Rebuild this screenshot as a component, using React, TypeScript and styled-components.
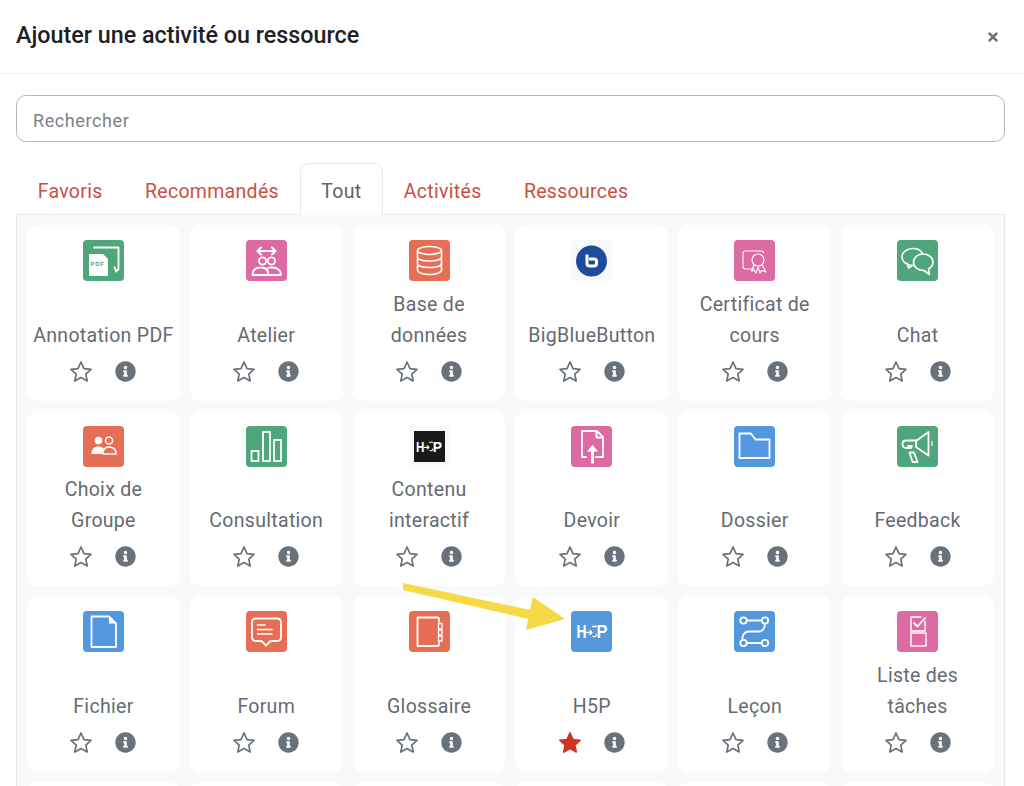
import React from "react";
import styled, { createGlobalStyle } from "styled-components";
import { FaInfoCircle, FaTimes } from "react-icons/fa";

const GREEN = "#4fa67b";
const PINK = "#dc6aa3";
const ORANGE = "#e66e55";
const BLUE = "#5398de";

const Line = (props: React.SVGProps<SVGPathElement>) => (
  <path fill="none" stroke="#fff" strokeWidth={1.8} strokeLinejoin="round" strokeLinecap="round" {...props} />
);

// logo: H and P are text, the arrow between them is a drawing
const H5pMark = ({ small }: { small?: boolean }) => (
  <g
    fill="#fff"
    fontFamily="'Liberation Sans', sans-serif"
    fontWeight="700"
    transform={small ? "translate(20 20.5) scale(.84) translate(-21 -20.5)" : undefined}
  >
    <text x="5.500" y="27" fontSize="18" textLength="10" lengthAdjust="spacingAndGlyphs">H</text>
    <text x="25.500" y="27" fontSize="18" textLength="11" lengthAdjust="spacingAndGlyphs">P</text>
    <Line strokeWidth={1.3} d="M15.500 21.500H21M19 19.500L21 21.500L19 23.500M22 25.500C24 26 25.500 25 25.500 23.500M21.500 15.500H25.500" />
  </g>
);

const icons: Record<string, React.ReactNode> = {
  pdf: (
    <>
      <Line d="M11 7.500H35.500V29L33 31.500L31.500 27" />
      <path d="M6 14H20L25 19V36H6Z" fill="#fff" />
      <text x="7.600" y="26" fontSize="6" fontWeight="700" letterSpacing="0.6" fill={GREEN} fontFamily="'Liberation Sans', sans-serif">PDF</text>
    </>
  ),
  workshop: (
    <>
      <Line d="M12 11H29M15 7.500L11.500 11L15 14.500M26 7.500L29.500 11L26 14.500" strokeWidth={2} />
      <circle cx="16.500" cy="21" r="3.600" fill="none" stroke="#fff" strokeWidth="1.800" />
      <circle cx="25.500" cy="21" r="3.600" fill="none" stroke="#fff" strokeWidth="1.800" />
      <Line d="M6.500 35C6.500 30 10 27.500 15 27.500C20 27.500 22.500 30 22.500 35ZM22 27.800C23 27.500 24.500 27.500 26 27.500C31 27.500 35 30 35 35H22.500" />
    </>
  ),
  database: (
    <>
      <ellipse cx="20.500" cy="10.500" rx="12" ry="4" fill="none" stroke="#fff" strokeWidth="1.600" />
      <Line strokeWidth={1.6} d="M8.500 10.500V30C8.500 32.500 14 34.500 20.500 34.500C27 34.500 32.500 32.500 32.500 30V10.500M8.500 17C8.500 19.500 14 21 20.500 21C27 21 32.500 19.500 32.500 17M8.500 23.500C8.500 26 14 27.500 20.500 27.500C27 27.500 32.500 26 32.500 23.500" />
    </>
  ),
  bbb: (
    <>
      <circle cx="20.500" cy="21" r="15.500" fill="#1f4b9c" />
      <path d="M16 14.500V23.500C16 25 17 26 18.500 26H23C24.500 26 25.500 25 25.500 23.500V21.500C25.500 20 24.500 19 23 19H18" fill="none" stroke="#fff" strokeWidth="3" strokeLinejoin="round" />
    </>
  ),
  certificate: (
    <>
      <Line strokeWidth={1.1} d="M20 29H11.500C10 29 9 28 9 26.500V13.500C9 12 10 11 11.500 11H27C28.500 11 29.500 12 29.500 13" />
      <circle cx="24" cy="20" r="6" fill="none" stroke="#fff" strokeWidth="1.100" />
      <Line strokeWidth={1.1} d="M20 25L17.500 31L20.500 30.500L22 33L24 27L26 33L27.500 30.500L32 32L28 25" />
    </>
  ),
  chat: (
    <>
      <Line d="M15 25.500C9 25 5 21.500 5 17C5 12 10 8.500 16 8.500C20.500 8.500 24 10.500 25.500 13.500M10 23L11.500 28L15.500 25.500" strokeWidth={1.6} />
      <Line d="M26 14C31.500 14 36 17.500 36 22C36 25 34 27.500 31.500 29L32.500 34.500L27 30.500C21 30.500 16.500 27 16.500 22C16.500 17.500 21 14 26 14Z" strokeWidth={1.6} />
    </>
  ),
  group: (
    <>
      <circle cx="15.500" cy="14.500" r="3.800" fill="#fff" />
      <path d="M8.500 28C8.500 23 11 20.500 15.500 20.500C18 20.500 20 21.500 21 23C19.500 24.500 19 26 19 28Z" fill="#fff" />
      <circle cx="26" cy="14.500" r="3.500" fill="none" stroke="#fff" strokeWidth="1.500" />
      <Line strokeWidth={1.5} d="M20 28C20 23 22.500 21 26 21C30 21 33 23 33 28Z" />
    </>
  ),
  poll: (
    <>
      <rect x="5.500" y="25" width="7" height="10" fill="none" stroke="#fff" strokeWidth="1.800" />
      <rect x="17" y="6" width="7" height="29" fill="none" stroke="#fff" strokeWidth="1.800" />
      <rect x="28" y="14" width="7" height="21" fill="none" stroke="#fff" strokeWidth="1.800" />
    </>
  ),
  h5pDark: (
    <>
      <rect x="5" y="5" width="31" height="31" fill="#1a1a1a" />
      <H5pMark small />
    </>
  ),
  assign: (
    <>
      <Line d="M15 31H11V5H26L32 11V31H25M25.500 5.500V11.500H32" />
      <path d="M21.500 19L27 25.500H23V37.500H20V25.500H16Z" fill="#fff" />
    </>
  ),
  folder: <Line d="M5.500 32V7.500H17L21.500 13.500H35.500V32Z" />,
  feedback: (
    <>
      <Line d="M19 15L31.500 6V29.500L19 21ZM19 14.500H9.500C7 14.500 5.500 16 5.500 18C5.500 20.500 7 22 9.500 22H14L15 20H11" />
      <Line d="M12.500 26.500H17L20.500 36H15.500Z" />
      <Line d="M35 15.500V19.500" strokeWidth={1.2} />
    </>
  ),
  file: (
    <>
      <Line d="M8.500 36V5.500H26L33 12.500V36Z" />
      <path d="M26 6L32.500 12.500H26Z" fill="#fff" />
    </>
  ),
  forum: (
    <>
      <Line d="M10 7.500H31C33.500 7.500 35 9 35 11.500V26C35 28.500 33.500 30 31 30H24.500L20 34.500L15.500 30H10C7.500 30 6 28.500 6 26V11.500C6 9 7.500 7.500 10 7.500Z" />
      <Line d="M11.500 14H19M11.500 18.500H26M11.500 23H26" strokeWidth={1.6} />
    </>
  ),
  glossary: (
    <>
      <Line d="M30 11V8C30 7 29.500 6.500 28.500 6.500H8.500V35H28.500C29.500 35 30 34.500 30 33.500V31" />
      <Line strokeWidth={1.3} d="M29.500 12.500H33V18H29.500ZM29.500 19H33V24H29.500ZM29.500 25H33V30H29.500Z" />
    </>
  ),
  h5p: <H5pMark />,
  lesson: (
    <>
      <circle cx="9.500" cy="9.500" r="3.200" fill="none" stroke="#fff" strokeWidth="1.800" />
      <circle cx="31" cy="9.500" r="3.200" fill="none" stroke="#fff" strokeWidth="1.800" />
      <circle cx="9.500" cy="32" r="3.200" fill="none" stroke="#fff" strokeWidth="1.800" />
      <circle cx="31" cy="32" r="3.200" fill="none" stroke="#fff" strokeWidth="1.800" />
      <Line d="M12.700 9.500H27.800M12.700 32H27.800M31 12.700C31 17 28.500 20.500 25 20.500H15C10.500 20.500 8 24 8.500 28.800" />
    </>
  ),
  checklist: (
    <>
      <Line strokeWidth={1.4} d="M28 10V20H14V6H24" />
      <Line strokeWidth={1.8} d="M17 12L20.500 15.500L28 7" />
      <rect x="14" y="22" width="15" height="13" fill="none" stroke="#fff" strokeWidth="1.400" />
    </>
  ),
};

type Activity = { name: string; icon: React.ReactNode; tint: string; starred?: boolean };

const activities: Activity[] = [
  { name: "Annotation PDF", icon: icons.pdf, tint: GREEN },
  { name: "Atelier", icon: icons.workshop, tint: PINK },
  { name: "Base de\ndonnées", icon: icons.database, tint: ORANGE },
  { name: "BigBlueButton", icon: icons.bbb, tint: "#f8f9fa" },
  { name: "Certificat de\ncours", icon: icons.certificate, tint: PINK },
  { name: "Chat", icon: icons.chat, tint: GREEN },
  { name: "Choix de\nGroupe", icon: icons.group, tint: ORANGE },
  { name: "Consultation", icon: icons.poll, tint: GREEN },
  { name: "Contenu\ninteractif", icon: icons.h5pDark, tint: "#f8f9fa" },
  { name: "Devoir", icon: icons.assign, tint: PINK },
  { name: "Dossier", icon: icons.folder, tint: BLUE },
  { name: "Feedback", icon: icons.feedback, tint: GREEN },
  { name: "Fichier", icon: icons.file, tint: BLUE },
  { name: "Forum", icon: icons.forum, tint: ORANGE },
  { name: "Glossaire", icon: icons.glossary, tint: ORANGE },
  { name: "H5P", icon: icons.h5p, tint: BLUE, starred: true },
  { name: "Leçon", icon: icons.lesson, tint: BLUE },
  { name: "Liste des\ntâches", icon: icons.checklist, tint: PINK },
];

const tabs = ["Favoris", "Recommandés", "Tout", "Activités", "Ressources"];

const STAR = "11,1 14,7.6 21,8.4 15.8,13.1 17.2,20 11,16.5 4.8,20 6.200,13.100 1,8.400 8,7.600";

function App() {
  return (
    <Page>
      <GlobalStyle />
      <Header>
        <Title>Ajouter une activité ou ressource</Title>
        <CloseButton aria-label="Fermer">
          <FaTimes />
        </CloseButton>
      </Header>
      <Body>
        <Search placeholder="Rechercher" />
        <Tabs>
          {tabs.map((t) => (
            <Tab key={t} $active={t === "Tout"}>
              {t}
            </Tab>
          ))}
        </Tabs>
        <Panel>
          {activities.map((a) => (
            <Card key={a.name}>
              <IconBox $tint={a.tint}>
                <svg width="41" height="41" viewBox="0 0 41 41">
                  {a.icon}
                </svg>
              </IconBox>
              <Name>
                <span>{a.name}</span>
              </Name>
              <Actions>
                <StarIcon viewBox="0 0 22 21" $on={a.starred}>
                  <polygon points={STAR} />
                </StarIcon>
                <InfoIcon>
                  <FaInfoCircle />
                </InfoIcon>
              </Actions>
            </Card>
          ))}
          {[0, 1, 2, 3, 4, 5].map((i) => (
            <Card key={i} />
          ))}
        </Panel>
      </Body>
      <Arrow viewBox="0 0 165 70" aria-hidden="true">
        <path d="M0 3L127 30L130 17L162 39L123 50L125 39L0 10Z" fill="#f5da45" />
      </Arrow>
    </Page>
  );
}

const GlobalStyle = createGlobalStyle`
  html, body {
    margin: 0;
    height: 786px;
    overflow: hidden;
    background: #fff;
  }
  * {
    box-sizing: border-box;
  }
`;

const Page = styled.div`
  position: relative;
  width: 1024px;
  height: 786px;
  overflow: hidden;
  font-family: Roboto, "Liberation Sans", sans-serif;
  background: #fff;
`;

const Header = styled.div`
  height: 74px;
  border-bottom: 1px solid #eceef0;
  display: flex;
  align-items: center;
  justify-content: space-between;
  padding: 0 24px 4px 16px;
`;

const Title = styled.h1`
  margin: 0;
  font-size: 23.3px;
  font-weight: 500;
  color: #1d2125;
`;

const CloseButton = styled.button`
  border: none;
  background: none;
  padding: 0;
  display: flex;
  margin-top: 4px;
  color: #6a737b;
  font-size: 14px;
`;

const Body = styled.div`
  padding: 21px 19px 0 16px;
`;

const Search = styled.input`
  display: block;
  width: 100%;
  height: 47px;
  border: 1px solid #b4b7ba;
  border-radius: 10px;
  padding: 3px 16px 0;
  font-family: inherit;
  font-size: 18px;
  letter-spacing: 0.6px;
  outline: none;
  &::placeholder {
    color: #7c8289;
    opacity: 1;
  }
`;

const Tabs = styled.div`
  display: flex;
  margin: 21px 0 0 0.5px;
  height: 51px;
`;

const Tab = styled.div<{ $active?: boolean }>`
  position: relative;
  z-index: 1;
  height: 52px;
  padding: 4px 20.2px 0;
  display: flex;
  align-items: center;
  font-size: 19.5px;
  letter-spacing: 0.3px;
  color: ${(p) => (p.$active ? "#5c636b" : "#cb4f43")};
  background: ${(p) => (p.$active ? "#fff" : "transparent")};
  border: 1px solid ${(p) => (p.$active ? "#e6e8ea" : "transparent")};
  border-bottom: none;
  border-radius: 9px 9px 0 0;
`;

const Panel = styled.div`
  display: grid;
  grid-template-columns: repeat(6, 1fr);
  grid-auto-rows: 175.6px;
  gap: 10px;
  padding: 10px;
  background: #f8f9fa;
  border: 1px solid #e6e8ea;
`;

const Card = styled.div`
  display: flex;
  flex-direction: column;
  align-items: center;
  padding-top: 15px;
  background: #fff;
  border-radius: 10px;
`;

const IconBox = styled.div<{ $tint: string }>`
  width: 41px;
  height: 41px;
  flex: none;
  border-radius: 4px;
  background: ${(p) => p.$tint};
  svg {
    display: block;
  }
`;

const Name = styled.div`
  margin-top: 7.5px;
  height: 62px;
  display: flex;
  align-items: flex-end;
  text-align: center;
  font-size: 19.5px;
  letter-spacing: 0.3px;
  line-height: 31px;
  color: #646b73;
  white-space: pre-line;
`;

const Actions = styled.div`
  margin-top: 10px;
  display: flex;
  align-items: center;
  gap: 23px;
`;

const StarIcon = styled.svg<{ $on?: boolean }>`
  width: 22px;
  height: 21px;
  polygon {
    fill: ${(p) => (p.$on ? "#cf3324" : "none")};
    stroke: ${(p) => (p.$on ? "#cf3324" : "#69717a")};
    stroke-width: 1.7;
    stroke-linejoin: round;
  }
`;

const InfoIcon = styled.span`
  display: flex;
  font-size: 21px;
  color: #69717a;
`;

const Arrow = styled.svg`
  position: absolute;
  left: 403px;
  top: 580px;
  width: 165px;
  height: 70px;
`;

export default App;
